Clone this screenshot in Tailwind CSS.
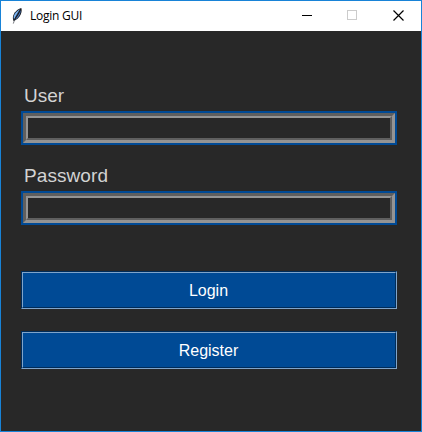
<!DOCTYPE html>
<html lang="en">
<head>
<meta charset="utf-8">
<title>Login GUI</title>
<script src="https://cdn.jsdelivr.net/npm/@tailwindcss/browser@4"></script>
</head>
<body class="w-[422px] h-[432px] overflow-hidden">
<div class="flex flex-col w-[422px] h-[432px] border border-[#1883d7] bg-[#282828] font-['Liberation_Sans',Arial,sans-serif]">
  <header class="flex h-[30px] shrink-0 items-center bg-white text-black">
    <svg class="ml-[9px] h-4 w-[14px] shrink-0" viewBox="0 0 14 16">
      <path d="M11.300 0C7.500 1 3.800 4.500 3 8.500c-.3 1.700 0 3.200.5 4.500 3-.8 6-3.800 7.300-6.800.9-2.200 1.200-4.400.5-6.200z" fill="#15181f"/>
      <path d="M10 1.200C6.800 3 4 5.800 3.600 8.800l.3 2.600C6 8 8.300 4.700 10 1.200z" fill="#7db6f5"/>
      <path d="M10.700 2C9.400 5.800 7 8.900 4.900 11.900 8.200 10 10.900 6.300 10.700 2z" fill="#4a78bd"/>
      <path d="M9.600 2.300C7 6 4.700 10.800 3.300 15.600" fill="none" stroke="#20252f" stroke-width=".6"/>
    </svg>
    <div class="ml-[6px] w-[240px] whitespace-nowrap font-['Open_Sans','Noto_Sans',sans-serif] text-[12px] leading-[16px] tracking-[-0.25px]">Login GUI</div>
    <div class="flex h-[28px] self-start ml-auto">
      <div class="flex w-[45px] items-center justify-center"><svg class="size-[11px]" viewBox="0 0 11 11" shape-rendering="crispEdges"><path d="M0 5h10v1H0z" fill="#000"/></svg></div>
      <div class="flex w-[45px] items-center justify-center"><svg class="size-[11px]" viewBox="0 0 11 11" shape-rendering="crispEdges"><path d="M.5 .5h9v9h-9z" fill="none" stroke="#ccc"/></svg></div>
      <div class="flex w-[46px] items-center justify-center"><svg class="size-[11px]" viewBox="0 0 11 11"><path d="M.5 .5l10 10M10.500 .5l-10 10" fill="none" stroke="#000" stroke-width="1.200"/></svg></div>
    </div>
  </header>
  <main class="flex flex-col pl-5 pr-6 pt-[54px] text-[#d3d3d3]">
    <label class="h-[26px] pl-[3px] text-[19px] leading-[22px]" for="user">User</label>
    <div class="h-[34px] border-2 border-[#004a95]">
      <div class="h-full border-[3px] border-t-[#5f5f5f] border-l-[#5f5f5f] border-b-[#949494] border-r-[#949494]">
        <input id="user" class="block h-full w-full border-2 border-t-[#949494] border-l-[#949494] border-b-[#5f5f5f] border-r-[#5f5f5f] bg-[#282828] outline-none">
      </div>
    </div>
    <label class="mt-5 h-[26px] pl-[3px] text-[19px] leading-[22px] tracking-[0.08px]" for="password">Password</label>
    <div class="h-[34px] border-2 border-[#004a95]">
      <div class="h-full border-[3px] border-t-[#5f5f5f] border-l-[#5f5f5f] border-b-[#949494] border-r-[#949494]">
        <input id="password" type="password" class="block h-full w-full border-2 border-t-[#949494] border-l-[#949494] border-b-[#5f5f5f] border-r-[#5f5f5f] bg-[#282828] outline-none">
      </div>
    </div>
    <button class="mt-[46px] h-[38px] border border-t-[#002c59] border-l-[#002c59] border-b-[#7fa4ca] border-r-[#7fa4ca] text-white">
      <span class="flex h-full items-center justify-center border border-t-[#7fa4ca] border-l-[#7fa4ca] border-b-[#002c59] border-r-[#002c59] bg-[#004a95] pt-[2px] pr-px text-[16px]">Login</span>
    </button>
    <button class="mt-[22px] h-[38px] border border-t-[#002c59] border-l-[#002c59] border-b-[#7fa4ca] border-r-[#7fa4ca] text-white">
      <span class="flex h-full items-center justify-center border border-t-[#7fa4ca] border-l-[#7fa4ca] border-b-[#002c59] border-r-[#002c59] bg-[#004a95] pt-[2px] pr-px text-[16px]">Register</span>
    </button>
  </main>
</div>
</body>
</html>
